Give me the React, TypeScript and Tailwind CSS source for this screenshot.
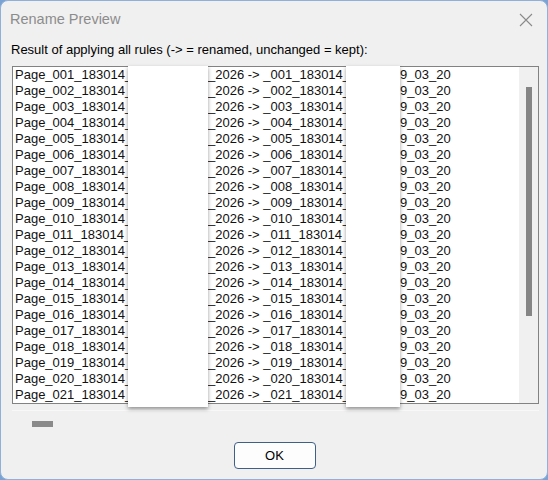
import React from 'react';

const rows = Array.from({ length: 21 }, (_, i) => String(i + 1).padStart(3, '0'));

function CloseIcon() {
  return (
    <svg width="14" height="14" viewBox="0 0 14 14" fill="none" stroke="#8a8a8a" strokeWidth="1.1">
      <path d="M1 1 L13 13 M13 1 L1 13" />
    </svg>
  );
}

export default function App() {
  return (
    <div className="w-[548px] h-[480px] bg-[#7aa3d4] font-['Liberation_Sans',Arial,sans-serif]">
      <div className="relative w-full h-full bg-[#f0f0f0] border border-[#8fb0da] rounded-[8px] flex flex-col overflow-hidden">
        {/* title bar */}
        <div className="h-[37px] flex items-center justify-between pl-[9px] pr-[14px]">
          <span className="text-[14.5px] text-[#8c8c8c]">Rename Preview</span>
          <CloseIcon />
        </div>

        <div className="mt-[4px] pl-[10px] h-4 leading-4 text-[13px] text-black">
          Result of applying all rules (-&gt; = renamed, unchanged = kept):
        </div>

        {/* preview list */}
        <div className="mt-[8px] ml-[11px] w-[527px] h-[338px] border border-[#828282] bg-white flex">
          <div className="flex-1 pl-[2px] overflow-hidden">
            {rows.map((n) => (
              <div key={n} className="flex h-4 leading-4 text-[13px] text-[#111] whitespace-pre">
                <span className="w-[193px] shrink-0">{`Page_${n}_183014_29_03_2026`}</span>
                <span className="w-[192px] shrink-0">{`_2026 -> _${n}_183014_29_0`}</span>
                <span>9_03_20</span>
              </div>
            ))}
          </div>
          {/* vertical scrollbar */}
          <div className="w-[19px] bg-[#f0f0f0] pt-[20px] flex justify-center">
            <div className="w-[6px] h-[229px] bg-[#858585] ml-[1px]" />
          </div>
        </div>

        {/* horizontal scrollbar */}
        <div className="ml-[11px] w-[527px] h-[28px] border-t border-[#f8f8f8] mt-[6px] pt-[10px] pl-[20px]">
          <div className="w-[21px] h-[6px] bg-[#8a8a8a]" />
        </div>

        <div className="flex justify-center mt-[4px] pl-[1px]">
          <button className="w-[82px] h-[27px] rounded-[4px] border border-[#3f5f86] bg-[#fdfdfd] text-[13px] text-black leading-none">
            OK
          </button>
        </div>

        {/* masked regions */}
        <div className="absolute left-[127px] top-[65px] w-[80px] h-[341px] bg-white shadow-[0_2px_4px_rgba(0,0,0,0.4)]" />
        <div className="absolute left-[345px] top-[65px] w-[54px] h-[341px] bg-white shadow-[0_2px_4px_rgba(0,0,0,0.4)]" />
      </div>
    </div>
  );
}
